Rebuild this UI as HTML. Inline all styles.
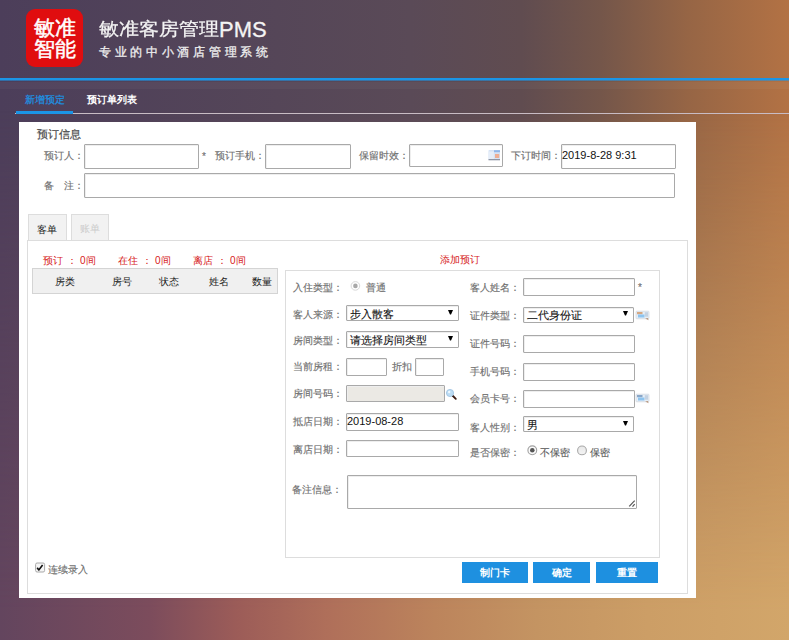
<!DOCTYPE html>
<html><head><meta charset="utf-8">
<style>
*{margin:0;padding:0;box-sizing:border-box}
html,body{width:790px;height:640px;overflow:hidden}
body{position:relative;font-family:"Liberation Sans",sans-serif;font-size:10px;color:#666}
.bg{position:absolute;left:0;top:0;width:790px;height:640px;background:linear-gradient(to right,#4c3e5a 0%,#554658 35%,#5a4a57 52%,#604c50 66%,#74564a 76%,#966545 87%,#b37244 100%)}
.bg2{position:absolute;left:0;top:0;width:790px;height:640px;background:linear-gradient(to right,#63455e 0%,#7c4c5c 19%,#9c5c58 30%,#b0705a 42%,#bc845c 55%,#c49462 68%,#cc9e66 82%,#d2a66a 100%);-webkit-mask-image:linear-gradient(to bottom,transparent 0px,transparent 110px,black 610px)}
.abs{position:absolute;white-space:nowrap}
.logo{left:26px;top:9px;width:57px;height:57.5px;background:#e00d0f;border-radius:9px;color:#fff;font-size:21px;line-height:21px;text-align:center;padding-top:8px;-webkit-text-stroke:0.5px #fff}
.title{left:99px;top:18px;color:#f4f4f4;font-size:20px;line-height:24px;-webkit-text-stroke:0.3px #f4f4f4}
.sub{left:99px;top:44px;color:#eee;font-size:12px;line-height:16px;letter-spacing:3.7px;-webkit-text-stroke:0.3px #eee}
.blueline{left:0;top:78px;width:789px;height:3px;background:linear-gradient(to bottom,#1b95e6 0,#1b95e6 2px,rgba(27,149,230,.55) 2px)}
.navline{left:15px;top:113px;width:774px;height:1px;background:#c8bcc4}
.navul{left:16px;top:111px;width:57px;height:3px;background:#1b95e6}
.panel{left:19px;top:122px;width:677px;height:476px;background:#fff}
.lbl{color:#707070;font-size:10px;line-height:12px;-webkit-text-stroke:0.15px #707070}
.inp{border:1px solid #a9a9a9;border-radius:1px;background:#fff;box-shadow:inset 1px 1px 0 #eee}
.red{color:#d62020;font-size:10px;line-height:12px}
.btn{background:#1e90e0;color:#fff;font-weight:bold;font-size:10px;line-height:21px;text-align:center;height:21px}
</style></head><body>
<div class="bg"></div><div class="bg2"></div>

<div class="abs logo">敏准<br>智能</div>
<div class="abs title"><span style="display:inline-block;transform:scaleY(0.9);transform-origin:0 0">敏准客房管理</span><span style="font-size:22px">PMS</span></div>
<div class="abs sub">专业的中小酒店管理系统</div>
<div class="abs blueline"></div>
<div class="abs" style="left:0;top:82px;width:789px;height:7px;background:rgba(255,255,255,0.035)"></div>
<div class="abs" style="left:25px;top:94px;color:#1b95e6;font-size:10px;line-height:12px;-webkit-text-stroke:0.2px #1b95e6">新增预定</div>
<div class="abs" style="left:87px;top:94px;color:#fff;font-weight:bold;font-size:10px;line-height:12px">预订单列表</div>
<div class="abs navline"></div>
<div class="abs navul"></div>

<div class="abs panel"></div>
<div class="abs" style="left:37px;top:128px;color:#4a4a4a;font-size:11px;line-height:12px;-webkit-text-stroke:0.2px #4a4a4a">预订信息</div>

<div class="abs lbl" style="left:44px;top:150px">预订人：</div>
<div class="abs inp" style="left:84px;top:144px;width:115px;height:25px"></div>
<div class="abs lbl" style="left:202px;top:151px">*</div>
<div class="abs lbl" style="left:215px;top:150px">预订手机：</div>
<div class="abs inp" style="left:265px;top:144px;width:86px;height:25px"></div>
<div class="abs lbl" style="left:359px;top:150px">保留时效：</div>
<div class="abs inp" style="left:409px;top:144px;width:94px;height:23px"></div>
<div class="abs lbl" style="left:511px;top:150px">下订时间：</div>
<div class="abs inp" style="left:561px;top:144px;width:115px;height:25px"></div>
<div class="abs" style="left:562px;top:149px;color:#111;font-size:11px;line-height:12px">2019-8-28 9:31</div>

<div class="abs lbl" style="left:44px;top:180px">备<span style="margin-left:10px">注：</span></div>
<div class="abs inp" style="left:84px;top:173px;width:591px;height:25px"></div>

<!-- tabs -->
<div class="abs" style="left:28px;top:214px;width:39px;height:27px;background:#f2f2f2;border:1px solid #ddd;border-bottom:none"></div>
<div class="abs" style="left:37px;top:224px;color:#222;font-weight:500;font-size:10px;line-height:12px">客单</div>
<div class="abs" style="left:71px;top:214px;width:38px;height:26px;background:#f2f2f2;border:1px solid #ddd;border-bottom:none"></div>
<div class="abs" style="left:80px;top:223px;color:#ccc;font-size:10px;line-height:12px">账单</div>
<div class="abs" style="left:27px;top:240px;width:661px;height:354px;border:1px solid #ddd"></div>

<div class="abs red" style="left:43px;top:255px">预订<span style="margin-left:3.5px;letter-spacing:3.5px">：</span>0间</div>
<div class="abs red" style="left:118px;top:255px">在住<span style="margin-left:3.5px;letter-spacing:3.5px">：</span>0间</div>
<div class="abs red" style="left:193px;top:255px">离店<span style="margin-left:3.5px;letter-spacing:3.5px">：</span>0间</div>
<div class="abs" style="left:32px;top:268px;width:246px;height:26px;background:#f0f0f0;border:1px solid #d4d4d4"></div>
<div class="abs" style="left:55px;top:276px;color:#222;font-size:10px;line-height:12px;font-weight:500">房类</div>
<div class="abs" style="left:112px;top:276px;color:#222;font-size:10px;line-height:12px;font-weight:500">房号</div>
<div class="abs" style="left:159px;top:276px;color:#222;font-size:10px;line-height:12px;font-weight:500">状态</div>
<div class="abs" style="left:209px;top:276px;color:#222;font-size:10px;line-height:12px;font-weight:500">姓名</div>
<div class="abs" style="left:252px;top:276px;color:#222;font-size:10px;line-height:12px;font-weight:500">数量</div>

<div class="abs red" style="left:440px;top:254px">添加预订</div>
<div class="abs" style="left:285px;top:270px;width:375px;height:288px;border:1px solid #ddd"></div>

<!-- left column form -->
<div class="abs lbl" style="left:293px;top:282px">入住类型：</div>
<svg class="abs" style="left:350px;top:280px" width="12" height="12" viewBox="0 0 12 12"><circle cx="5.4" cy="5.9" r="4.3" fill="#fff" stroke="#d8d8d8" stroke-width="1"/><circle cx="5.4" cy="5.9" r="2.3" fill="#a8a8a8"/></svg>
<div class="abs lbl" style="left:366px;top:282px">普通</div>

<div class="abs lbl" style="left:293px;top:309px">客人来源：</div>
<div class="abs inp" style="left:346px;top:305px;width:113px;height:16px"></div>
<div class="abs" style="left:350px;top:308px;color:#111;font-size:11px;line-height:12px;-webkit-text-stroke:0.1px #111">步入散客</div>
<svg class="abs" style="left:447.7px;top:310px" width="6" height="5" viewBox="0 0 6 5"><polygon points="0,0 5,0 3,4.5 2,4.5" fill="#000"/></svg>

<div class="abs lbl" style="left:293px;top:335px">房间类型：</div>
<div class="abs inp" style="left:346px;top:331px;width:113px;height:17px"></div>
<div class="abs" style="left:350px;top:334px;color:#111;font-size:11px;line-height:12px;-webkit-text-stroke:0.1px #111">请选择房间类型</div>
<svg class="abs" style="left:447.7px;top:336.2px" width="6" height="5" viewBox="0 0 6 5"><polygon points="0,0 5,0 3,4.5 2,4.5" fill="#000"/></svg>

<div class="abs lbl" style="left:293px;top:361px">当前房租：</div>
<div class="abs inp" style="left:346px;top:358px;width:41px;height:18px"></div>
<div class="abs lbl" style="left:392px;top:361px">折扣</div>
<div class="abs inp" style="left:415px;top:358px;width:29px;height:18px"></div>

<div class="abs lbl" style="left:293px;top:388px">房间号码：</div>
<div class="abs inp" style="left:346px;top:385px;width:99px;height:17px;background:#ebe9e4"></div>

<div class="abs lbl" style="left:293px;top:416px">抵店日期：</div>
<div class="abs inp" style="left:346px;top:413px;width:113px;height:18px"></div>
<div class="abs" style="left:347px;top:415px;color:#111;font-size:11px;line-height:12px">2019-08-28</div>

<div class="abs lbl" style="left:293px;top:444px">离店日期：</div>
<div class="abs inp" style="left:346px;top:440px;width:113px;height:17px"></div>

<div class="abs lbl" style="left:292px;top:484px">备注信息：</div>
<div class="abs inp" style="left:347px;top:475px;width:290px;height:34px"></div>
<svg class="abs" style="left:627px;top:498px" width="10" height="10" viewBox="0 0 10 10"><line x1="2.2" y1="8.4" x2="7.7" y2="2.7" stroke="#555" stroke-width="1.2"/><line x1="5.5" y1="8.7" x2="7.7" y2="6.2" stroke="#555" stroke-width="1.2"/></svg>

<!-- right column form -->
<div class="abs lbl" style="left:470px;top:282px">客人姓名：</div>
<div class="abs inp" style="left:523px;top:278px;width:112px;height:18px"></div>
<div class="abs lbl" style="left:638px;top:282px">*</div>

<div class="abs lbl" style="left:470px;top:310px">证件类型：</div>
<div class="abs inp" style="left:523px;top:307px;width:111px;height:16px"></div>
<div class="abs" style="left:527px;top:309px;color:#111;font-size:11px;line-height:12px;-webkit-text-stroke:0.1px #111">二代身份证</div>
<svg class="abs" style="left:623px;top:311.4px" width="6" height="5" viewBox="0 0 6 5"><polygon points="0,0 5,0 3,4.5 2,4.5" fill="#000"/></svg>

<div class="abs lbl" style="left:470px;top:338px">证件号码：</div>
<div class="abs inp" style="left:523px;top:335px;width:112px;height:18px"></div>

<div class="abs lbl" style="left:470px;top:366px">手机号码：</div>
<div class="abs inp" style="left:523px;top:363px;width:112px;height:18px"></div>

<div class="abs lbl" style="left:470px;top:393px">会员卡号：</div>
<div class="abs inp" style="left:523px;top:390px;width:112px;height:18px"></div>

<div class="abs lbl" style="left:470px;top:422px">客人性别：</div>
<div class="abs inp" style="left:523px;top:416px;width:111px;height:16px"></div>
<div class="abs" style="left:527px;top:419px;color:#111;font-size:11px;line-height:12px;-webkit-text-stroke:0.1px #111">男</div>
<svg class="abs" style="left:623px;top:421.2px" width="6" height="5" viewBox="0 0 6 5"><polygon points="0,0 5,0 3,4.5 2,4.5" fill="#000"/></svg>

<div class="abs lbl" style="left:470px;top:447px">是否保密：</div>
<svg class="abs" style="left:526px;top:444px" width="12" height="12" viewBox="0 0 12 12"><circle cx="6.3" cy="6.3" r="4.4" fill="#fafafa" stroke="#a0a0a0" stroke-width="1.1"/><circle cx="6.3" cy="6.3" r="2.3" fill="#555"/></svg>
<div class="abs lbl" style="left:540px;top:447px;color:#555">不保密</div>
<svg class="abs" style="left:576px;top:444px" width="12" height="12" viewBox="0 0 12 12"><defs><linearGradient id="rg" x1="0" y1="0" x2="0" y2="1"><stop offset="0" stop-color="#e8e8e8"/><stop offset="1" stop-color="#f4f4f4"/></linearGradient></defs><circle cx="6" cy="6.4" r="4.4" fill="url(#rg)" stroke="#a8a8a8" stroke-width="1.1"/></svg>
<div class="abs lbl" style="left:590px;top:447px;color:#555">保密</div>


<svg class="abs" style="left:488px;top:149px" width="13" height="12" viewBox="0 0 13 12"><rect x="0.5" y="1" width="11.5" height="10" rx="0.8" fill="#d6e3f5"/><rect x="0.8" y="2.5" width="5" height="7.5" fill="#e6eef9"/><rect x="6" y="1.2" width="6" height="2" fill="#8fb6ea"/><rect x="7" y="5" width="4.2" height="4" fill="#f2a484" opacity="0.85"/><rect x="0.5" y="10" width="11.5" height="1.3" fill="#8e96a6"/></svg>
<svg class="abs" style="left:635px;top:310px" width="15" height="12" viewBox="0 0 15 12"><rect x="1" y="1.2" width="13" height="7.6" rx="0.8" fill="#e6eef6" stroke="#d0d6de" stroke-width="0.7"/><rect x="2" y="2" width="5.5" height="2.2" fill="#d0905c" opacity="0.75"/><rect x="3" y="4.5" width="6.5" height="3" fill="#8ec4ef"/><rect x="9.8" y="2.2" width="3.2" height="4.5" fill="#c4d2e2"/><path d="M10.2 8.6 L13.6 10.2 L13 8 Z" fill="#b08868" opacity="0.85"/></svg>
<svg class="abs" style="left:635px;top:393px" width="15" height="12" viewBox="0 0 15 12"><rect x="1" y="1.2" width="13" height="7.6" rx="0.8" fill="#e6eef6" stroke="#d0d6de" stroke-width="0.7"/><rect x="2" y="2" width="5.5" height="2.2" fill="#6b8fb8" opacity="0.75"/><rect x="3" y="4.5" width="6.5" height="3" fill="#8ec4ef"/><rect x="9.8" y="2.2" width="3.2" height="4.5" fill="#c4d2e2"/><path d="M10.2 8.6 L13.6 10.2 L13 8 Z" fill="#b08868" opacity="0.85"/></svg>
<svg class="abs" style="left:445px;top:388px" width="13" height="13" viewBox="0 0 13 13"><line x1="7.5" y1="7.5" x2="10.8" y2="10.8" stroke="#3a1a10" stroke-width="1.8" stroke-linecap="round"/><circle cx="5" cy="5" r="3.6" fill="#bcdcf4" stroke="#9cc0e0" stroke-width="0.8"/><circle cx="4.2" cy="4" r="1.2" fill="#eef8ff"/></svg>

<!-- buttons -->
<div class="abs btn" style="left:462px;top:562px;width:66px">制门卡</div>
<div class="abs btn" style="left:533px;top:562px;width:57px">确定</div>
<div class="abs btn" style="left:596px;top:562px;width:62px">重置</div>

<!-- checkbox -->
<svg class="abs" style="left:34px;top:561px" width="12" height="12" viewBox="0 0 12 12"><rect x="1.6" y="2" width="9" height="9" rx="1.5" fill="#f6f6f6" stroke="#a8a8a8" stroke-width="1"/><polyline points="3.2,6.8 4.8,9 8.6,4" fill="none" stroke="#111" stroke-width="1.6" stroke-linejoin="round"/></svg>
<div class="abs lbl" style="left:48px;top:564px">连续录入</div>

<div class="abs" style="left:789px;top:0;width:1px;height:640px;background:#fff"></div>
</body></html>
